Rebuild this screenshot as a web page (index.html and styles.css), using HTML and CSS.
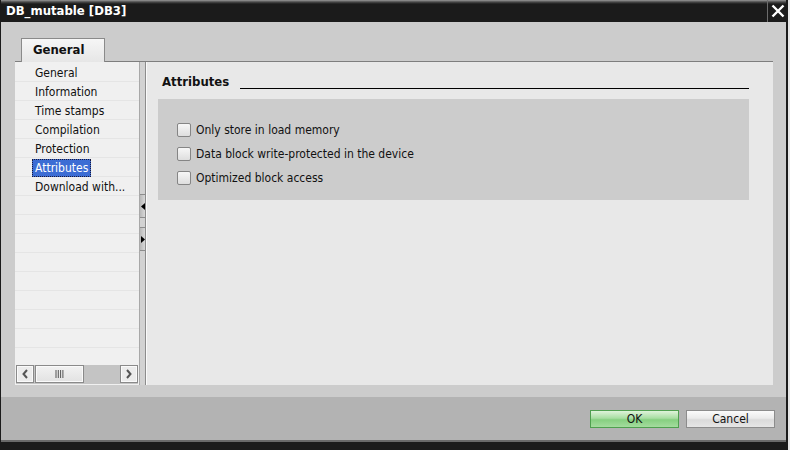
FILE: index.html
```html
<!DOCTYPE html>
<html>
<head>
<meta charset="utf-8">
<link rel="stylesheet" href="styles.css">
</head>
<body>
<div class="window">
  <div class="titlebar">
    <div class="title">DB_mutable [DB3]</div>
    <div class="close">
      <svg width="14" height="14" viewBox="0 0 14 14"><path d="M1.5 1.5 L12.5 12.5 M12.5 1.5 L1.5 12.5" stroke="#fff" stroke-width="2.4" fill="none"/></svg>
    </div>
  </div>
  <div class="main">
    <div class="tabs"><div class="tab">General</div></div>
    <div class="panel">
      <div class="nav">
        <div class="nav-list">
          <div class="nav-row"><span class="nav-item">General</span></div>
          <div class="nav-row"><span class="nav-item">Information</span></div>
          <div class="nav-row"><span class="nav-item">Time stamps</span></div>
          <div class="nav-row"><span class="nav-item">Compilation</span></div>
          <div class="nav-row"><span class="nav-item">Protection</span></div>
          <div class="nav-row"><span class="nav-item selected">Attributes</span></div>
          <div class="nav-row"><span class="nav-item">Download with...</span></div>
          <div class="nav-row"></div>
          <div class="nav-row"></div>
          <div class="nav-row"></div>
          <div class="nav-row"></div>
          <div class="nav-row"></div>
          <div class="nav-row"></div>
          <div class="nav-row"></div>
          <div class="nav-row"></div>
        </div>
        <div class="hscroll">
          <div class="sbtn"><svg width="8" height="10" viewBox="0 0 8 10"><path d="M6 1 L2.5 5 L6 9" stroke="#555" stroke-width="2" fill="none"/></svg></div>
          <div class="thumb"><svg width="9" height="8" viewBox="0 0 9 8"><path d="M1 0V8M3.3 0V8M5.6 0V8M7.9 0V8" stroke="#555" stroke-width="1"/></svg></div>
          <div class="track"></div>
          <div class="sbtn"><svg width="8" height="10" viewBox="0 0 8 10"><path d="M2 1 L5.5 5 L2 9" stroke="#555" stroke-width="2" fill="none"/></svg></div>
        </div>
      </div>
      <div class="splitter">
        <div class="split-btn first"><svg width="4" height="7" viewBox="0 0 4 7"><path d="M4 0 L0 3.5 L4 7Z" fill="#000"/></svg></div>
        <div class="split-btn second"><svg width="4" height="7" viewBox="0 0 4 7"><path d="M0 0 L4 3.5 L0 7Z" fill="#000"/></svg></div>
      </div>
      <div class="content">
        <div class="section-head">
          <span class="section-title">Attributes</span>
          <span class="section-line"></span>
        </div>
        <div class="group">
          <label class="check"><span class="box"></span>Only store in load memory</label>
          <label class="check"><span class="box"></span>Data block write-protected in the device</label>
          <label class="check"><span class="box"></span>Optimized block access</label>
        </div>
      </div>
    </div>
  </div>
  <div class="footer">
    <button class="btn ok">OK</button>
    <button class="btn cancel">Cancel</button>
  </div>
  <div class="bottom-line"></div>
</div>
</body>
</html>
```
FILE: styles.css
```css
* { box-sizing: border-box; }
html, body { margin: 0; padding: 0; }
body {
  width: 790px;
  height: 450px;
  overflow: hidden;
  background: #e6e6e6;
  font-family: "DejaVu Sans Condensed", "DejaVu Sans", sans-serif;
  font-size: 12px;
  color: #111;
}
.window {
  width: 788px;
  height: 450px;
  border-left: 1px solid #1b1b1b;
  border-right: 2px solid #1b1b1b;
  display: flex;
  flex-direction: column;
  background: #1b1b1b;
}
.titlebar {
  height: 22px;
  flex: none;
  display: flex;
  align-items: stretch;
  background: linear-gradient(#9a9a9a 0px, #4a4a4a 2px, #1b1b1b 4px);
}
.title {
  flex: 1;
  color: #fff;
  font-weight: bold;
  font-size: 13px;
  padding: 3px 0 0 5px;
  line-height: 16px;
}
.close {
  width: 19px;
  border-left: 1px solid #6c6c6c;
  display: flex;
  align-items: center;
  justify-content: center;
  padding-left: 1px;
}
.main {
  height: 375px;
  flex: none;
  background: #cccccc;
  padding: 16px 13px 0 14px;
}
.tabs {
  height: 23px;
  display: flex;
  padding-left: 6px;
}
.tab {
  width: 84px;
  height: 24px;
  border: 1px solid #8a8a8a;
  border-bottom: none;
  background: linear-gradient(#f6f6f6, #e6e6e6);
  font-weight: bold;
  font-size: 13px;
  padding: 3px 0 0 11px;
  position: relative;
  z-index: 1;
}
.panel {
  height: 324px;
  border-top: 1px solid #7e7e7e;
  display: flex;
}
.nav {
  width: 124px;
  background: #f0f0f0;
  display: flex;
  flex-direction: column;
}
.nav-list {
  flex: 1;
  overflow: hidden;
  padding-top: 1px;
}
.nav-row {
  height: 19px;
  border-bottom: 1px solid #e5e5e5;
  padding-left: 17px;
  padding-top: 1px;
  display: flex;
  align-items: center;
}
.nav-item {
  padding: 0 2px;
  line-height: 16px;
  border: 1px dotted transparent;
  color: #111;
}
.nav-item.selected {
  background: #3c6dd4;
  color: #fff;
  border-color: #1a1a3a;
}
.hscroll {
  height: 19px;
  margin: 0 1px 1px 1px;
  display: flex;
  background: #c4c4c4;
}
.sbtn {
  width: 18px;
  height: 18px;
  border: 1px solid #8a8a8a;
  background: #ececec;
  box-shadow: inset 0 0 0 1px #fafafa;
  display: flex;
  align-items: center;
  justify-content: center;
}
.thumb {
  width: 49px;
  height: 18px;
  margin-left: 1px;
  border: 1px solid #8a8a8a;
  background: linear-gradient(#f2f2f2, #e2e2e2);
  box-shadow: inset 0 0 0 1px #fafafa;
  display: flex;
  align-items: center;
  justify-content: center;
}
.track { flex: 1; }
.splitter {
  width: 8px;
  background: #d2d2d2;
  border-left: 1px solid #a8a8a8;
  border-right: 1px solid #fafafa;
  box-shadow: inset -1px 0 0 #8c8c8c;
  padding-top: 132px;
}
.split-btn {
  height: 24px;
  margin-right: 1px;
  background: linear-gradient(90deg, #b8b8b8, #d8d8d8);
  border-top: 1px solid #8c8c8c;
  border-bottom: 1px solid #8c8c8c;
  display: flex;
  align-items: center;
  justify-content: flex-start;
  padding-left: 1px;
}
.split-btn.second { margin-top: 9px; justify-content: flex-start; }
.content {
  flex: 1;
  background: #e8e8e8;
  padding: 12px 24px 0 11px;
}
.section-head {
  display: flex;
  align-items: flex-end;
  height: 16px;
  padding-left: 4px;
}
.section-title {
  font-weight: bold;
  font-size: 13px;
  line-height: 16px;
}
.section-line {
  flex: 1;
  height: 1px;
  background: #000;
  margin-left: 11px;
  margin-bottom: 1px;
}
.group {
  margin-top: 9px;
  height: 101px;
  background: #cccccc;
  padding: 24px 0 0 19px;
  display: flex;
  flex-direction: column;
  gap: 10px;
}
.check {
  display: flex;
  align-items: center;
  height: 14px;
  color: #111;
}
.box {
  width: 14px;
  height: 14px;
  border: 1px solid #858585;
  border-radius: 2px;
  background: linear-gradient(#f7f7f7, #dedede);
  margin-right: 5px;
}
.footer {
  height: 43px;
  flex: none;
  background: #b3b3b3;
  display: flex;
  justify-content: flex-end;
  align-items: flex-start;
  padding: 13px 11px 0 0;
  gap: 7px;
}
.btn {
  height: 18px;
  font-family: "DejaVu Sans Condensed", "DejaVu Sans", sans-serif;
  font-size: 12px;
  color: #111;
  padding: 0;
  line-height: 14px;
}
.ok {
  width: 89px;
  border: 1px solid #4f9f4f;
  background: linear-gradient(#dff3da, #a8dea2 45%, #86cf80 55%, #a4dc9e);
}
.cancel {
  width: 89px;
  border: 1px solid #8c8c8c;
  background: linear-gradient(#fbfbfb, #eaeaea 45%, #dadada 55%, #e6e6e6);
}
.bottom-line {
  height: 2px;
  flex: none;
  background: #6a6a6a;
}
```
